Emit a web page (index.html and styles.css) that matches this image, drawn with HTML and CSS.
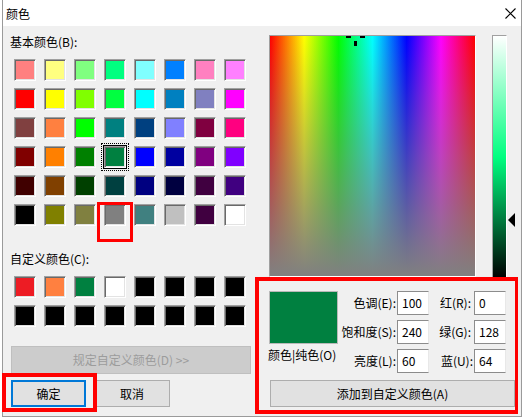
FILE: index.html
```html
<!DOCTYPE html>
<html lang="zh-CN">
<head>
<meta charset="utf-8">
<title>颜色</title>
<link rel="stylesheet" href="styles.css">
</head>
<body>
<div class="dialog">
  <div class="titlebar">
    <span class="title">颜色</span>
    <svg class="close" width="11" height="11" viewBox="0 0 11 11"><path d="M0.5 0.5L10.5 10.5M10.5 0.5L0.5 10.5" stroke="#000" stroke-width="1.1" fill="none"/></svg>
  </div>
  <div class="content">
    <div class="left">
      <div class="label">基本颜色(B):</div>
      <div class="swatches basic">
        <div class="sw" style="background:#ff8080"></div><div class="sw" style="background:#ffff80"></div><div class="sw" style="background:#80ff80"></div><div class="sw" style="background:#00ff80"></div><div class="sw" style="background:#80ffff"></div><div class="sw" style="background:#0080ff"></div><div class="sw" style="background:#ff80c0"></div><div class="sw" style="background:#ff80ff"></div>
        <div class="sw" style="background:#ff0000"></div><div class="sw" style="background:#ffff00"></div><div class="sw" style="background:#80ff00"></div><div class="sw" style="background:#00ff40"></div><div class="sw" style="background:#00ffff"></div><div class="sw" style="background:#0080c0"></div><div class="sw" style="background:#8080c0"></div><div class="sw" style="background:#ff00ff"></div>
        <div class="sw" style="background:#804040"></div><div class="sw" style="background:#ff8040"></div><div class="sw" style="background:#00ff00"></div><div class="sw" style="background:#008080"></div><div class="sw" style="background:#004080"></div><div class="sw" style="background:#8080ff"></div><div class="sw" style="background:#800040"></div><div class="sw" style="background:#ff0080"></div>
        <div class="sw" style="background:#800000"></div><div class="sw" style="background:#ff8000"></div><div class="sw" style="background:#008000"></div><div class="sw selected" style="background:#008040"></div><div class="sw" style="background:#0000ff"></div><div class="sw" style="background:#0000a0"></div><div class="sw" style="background:#800080"></div><div class="sw" style="background:#8000ff"></div>
        <div class="sw" style="background:#400000"></div><div class="sw" style="background:#804000"></div><div class="sw" style="background:#004000"></div><div class="sw" style="background:#004040"></div><div class="sw" style="background:#000080"></div><div class="sw" style="background:#000040"></div><div class="sw" style="background:#400040"></div><div class="sw" style="background:#400080"></div>
        <div class="sw" style="background:#000000"></div><div class="sw" style="background:#808000"></div><div class="sw" style="background:#808040"></div><div class="sw" style="background:#808080"></div><div class="sw" style="background:#408080"></div><div class="sw" style="background:#c0c0c0"></div><div class="sw" style="background:#400040"></div><div class="sw" style="background:#ffffff"></div>
      </div>
      <div class="label custom-label">自定义颜色(C):</div>
      <div class="swatches custom">
        <div class="sw" style="background:#ed1c24"></div><div class="sw" style="background:#ff8040"></div><div class="sw" style="background:#008040"></div><div class="sw" style="background:#ffffff"></div><div class="sw" style="background:#000000"></div><div class="sw" style="background:#000000"></div><div class="sw" style="background:#000000"></div><div class="sw" style="background:#000000"></div>
        <div class="sw" style="background:#000000"></div><div class="sw" style="background:#000000"></div><div class="sw" style="background:#000000"></div><div class="sw" style="background:#000000"></div><div class="sw" style="background:#000000"></div><div class="sw" style="background:#000000"></div><div class="sw" style="background:#000000"></div><div class="sw" style="background:#000000"></div>
      </div>
      <div class="btn disabled">规定自定义颜色(D) &gt;&gt;</div>
      <div class="btn-row">
        <div class="btn ok">确定</div>
        <div class="btn cancel">取消</div>
      </div>
    </div>
    <div class="right">
      <div class="picker-row">
        <div class="spectrum">
          <span class="ch ch-l"></span><span class="ch ch-r"></span><span class="ch ch-b"></span>
        </div>
        <div class="lumbar"></div>
        <div class="arrow-track"><span class="arrow"></span></div>
      </div>
      <div class="panel">
        <div class="preview"></div>
        <div class="plabel">色调(E):</div><div class="field">100</div>
        <div class="plabel">红(R):</div><div class="field">0</div>
        <div class="plabel">饱和度(S):</div><div class="field">240</div>
        <div class="plabel">绿(G):</div><div class="field">128</div>
        <div class="solid">颜色|纯色(O)</div>
        <div class="plabel">亮度(L):</div><div class="field">60</div>
        <div class="plabel">蓝(U):</div><div class="field">64</div>
      </div>
      <div class="btn add">添加到自定义颜色(A)</div>
    </div>
  </div>
  <div class="mark mark-swatch"></div>
  <div class="mark mark-ok"></div>
  <div class="mark mark-panel"></div>
</div>
</body>
</html>
```
FILE: styles.css
```css
* { box-sizing: border-box; }
body {
  margin: 0;
  background: #ffffff;
  font-family: "Noto Sans CJK SC", "Microsoft YaHei", sans-serif;
  font-size: 12px;
  color: #000;
}
.dialog {
  position: relative;
  margin-left: 2px;
  width: 520px;
  height: 417px;
  border: 1px solid #9a9a9a;
  border-top: none;
  background: #f0f0f0;
  display: flex;
  flex-direction: column;
}
.titlebar {
  height: 26px;
  background: #fff;
  display: flex;
  align-items: center;
  justify-content: space-between;
  padding: 1px 5px 0 3px;
  line-height: 16px;
}
.close { display: block; }
.content { flex: 1; display: flex; }
.left {
  width: 266px;
  padding: 8px 0 0 7px;
  display: flex;
  flex-direction: column;
}
.label { line-height: 16px; }
.swatches {
  display: grid;
  grid-template-columns: repeat(8, 22px);
  grid-auto-rows: 22px;
  column-gap: 8px;
  row-gap: 7px;
  margin-left: 4px;
}
.basic { margin-top: 9px; }
.custom-label { margin-top: 25px; }
.custom { margin-top: 9px; }
.sw {
  position: relative;
  border: 1px solid;
  border-color: #a0a0a0 #ffffff #ffffff #a0a0a0;
  box-shadow: inset 1px 1px 0 #696969, inset -1px -1px 0 #e3e3e3;
}
.selected { outline: 1px solid #000; }
.selected::after {
  content: "";
  position: absolute;
  left: -4px; top: -4px; right: -4px; bottom: -4px;
  border: 1px dotted #000;
}
.btn {
  display: flex;
  align-items: center;
  justify-content: center;
  background: #e1e1e1;
  border: 1px solid #adadad;
  line-height: 16px;
}
.disabled {
  margin-top: 19px;
  margin-left: 1px;
  width: 240px;
  height: 28px;
  background: #cccccc;
  border-color: #bfbfbf;
  color: #9c9c9c;
}
.btn-row {
  display: flex;
  margin-top: 6px;
  margin-left: 1px;
  gap: 8px;
}
.btn-row .btn { height: 27px; }
.ok { width: 75px; border: 2px solid #0078d7; }
.cancel { width: 76px; }
.right {
  flex: 1;
  padding-top: 9px;
  display: flex;
  flex-direction: column;
}
.picker-row { display: flex; align-items: flex-start; }
.spectrum {
  position: relative;
  width: 207px;
  height: 242px;
  border: 1px solid;
  border-color: #a0a0a0 #ffffff #ffffff #a0a0a0;
  background:
    linear-gradient(to bottom, rgba(128,128,128,0), #808080),
    linear-gradient(to right, #ff0000, #ffff00 16.67%, #00ff00 33.33%, #00ffff 50%, #0000ff 66.67%, #ff00ff 83.33%, #ff0000);
}
.ch { position: absolute; background: #000; }
.ch-l { left: 76px; top: 0; width: 5px; height: 2px; }
.ch-r { left: 90px; top: 0; width: 5px; height: 2px; }
.ch-b { left: 84px; top: 5px; width: 3px; height: 5px; }
.lumbar {
  margin-left: 16px;
  width: 15px;
  height: 244px;
  border: 1px solid;
  border-color: #a0a0a0 #ffffff #ffffff #a0a0a0;
  background: linear-gradient(to bottom, #ffffff, #00ff80 50%, #000000);
}
.arrow-track { position: relative; width: 12px; height: 244px; }
.arrow {
  position: absolute;
  left: 1px;
  top: 178px;
  width: 0; height: 0;
  border-top: 7px solid transparent;
  border-bottom: 7px solid transparent;
  border-right: 7px solid #000;
}
.panel {
  margin-top: 12px;
  display: grid;
  grid-template-columns: 70px 58px 32px 45px 32px;
  grid-template-rows: 24px 24px 24px;
  row-gap: 5px;
}
.preview {
  grid-row: 1 / 3;
  grid-column: 1;
  width: 69px;
  background: #008040;
  border: 1px solid #b9b9b9;
}
.plabel {
  display: flex;
  align-items: center;
  justify-content: flex-end;
  padding-right: 1px;
  line-height: 16px;
  white-space: nowrap;
}
.plabel:nth-of-type(4n) { padding-right: 3px; }
.field {
  display: flex;
  align-items: center;
  padding-left: 4px;
  background: #fff;
  border: 1px solid #8c8c8c;
  border-right-color: #e8e8e8;
  line-height: 16px;
}
.solid {
  grid-column: 1;
  grid-row: 3;
  margin-left: -1px;
  margin-top: -2px;
  line-height: 16px;
  white-space: nowrap;
}
.add {
  margin-top: 7px;
  margin-left: 1px;
  width: 245px;
  height: 27px;
}
.mark { position: absolute; border: 3px solid #ff0000; }
.mark-swatch { left: 94px; top: 202px; width: 36px; height: 40px; }
.mark-ok { left: -1px; top: 373px; width: 95px; height: 39px; border-width: 4px; }
.mark-panel { left: 252px; top: 277px; width: 263px; height: 137px; border-width: 4px 3px 4px 4px; }
```
